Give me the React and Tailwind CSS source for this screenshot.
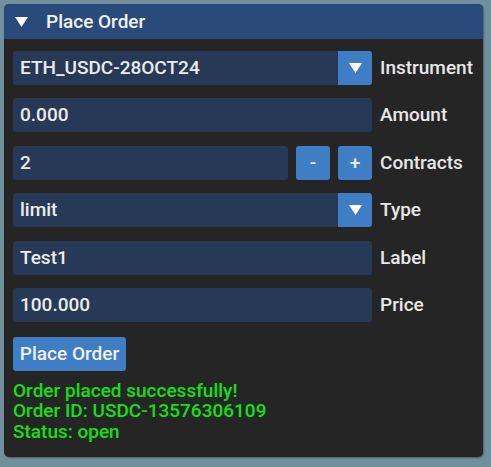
import React from "react";

const Tri = () => (
  <svg width="15" height="12" viewBox="0 0 15 12">
    <polygon points="1,1 14,1 7.5,11" fill="#ffffff" />
  </svg>
);

function Field({ value }) {
  return (
    <div className="flex-1 h-full bg-[#263a57] rounded-[3px] flex items-center pl-[7px] text-[#ececec]">
      {value}
    </div>
  );
}

function Btn({ children }) {
  return (
    <div className="w-[34px] h-full bg-[#3f7dc4] rounded-[3px] flex items-center justify-center text-[#ececec]">
      {children}
    </div>
  );
}

function Combo({ value }) {
  return (
    <div className="flex-1 h-full flex">
      <div className="flex-1 h-full bg-[#263a57] rounded-l-[3px] flex items-center pl-[7px] text-[#ececec]">
        {value}
      </div>
      <div className="w-[34px] h-full bg-[#3f7dc4] rounded-r-[3px] flex items-center justify-center">
        <Tri />
      </div>
    </div>
  );
}

function Row({ children, label }) {
  return (
    <div className="flex items-center h-[34px]">
      <div className="w-[359px] h-full flex gap-[8px]">{children}</div>
      <div className="ml-[8px] text-[#e8e8e8]">{label}</div>
    </div>
  );
}

export default function App() {
  return (
    <div
      className="w-[491px] h-[467px] bg-[#71909d] pt-[4px] pl-[4px]"
      style={{ fontFamily: "Roboto, 'Liberation Sans', sans-serif" }}
    >
      <div className="w-[479px] h-[453px] bg-[#252525] rounded-[5px] overflow-hidden shadow-[1px_1px_2px_rgba(0,0,0,0.35)] text-[19px] leading-[22px] font-medium">
        <div className="h-[35px] bg-[#294a7a] flex items-center pl-[10px] text-[#f2f2f2]">
          <Tri />
          <span className="ml-[17px]">Place Order</span>
        </div>
        <div className="pl-[9px] pt-[12px] flex flex-col gap-[13.4px]">
          <Row label="Instrument">
            <Combo value="ETH_USDC-28OCT24" />
          </Row>
          <Row label="Amount">
            <Field value="0.000" />
          </Row>
          <Row label="Contracts">
            <Field value="2" />
            <Btn>-</Btn>
            <Btn>+</Btn>
          </Row>
          <Row label="Type">
            <Combo value="limit" />
          </Row>
          <Row label="Label">
            <Field value="Test1" />
          </Row>
          <Row label="Price">
            <Field value="100.000" />
          </Row>
        </div>
        <div className="pl-[9px] mt-[15px]">
          <div className="w-[113px] h-[34px] bg-[#3f7dc4] rounded-[3px] flex items-center justify-center text-[#f0f0f0]">
            Place Order
          </div>
        </div>
        <div className="pl-[9px] mt-[10px] text-[#14e014] flex flex-col">
          <div className="h-[20.5px] leading-[20.5px]">Order placed successfully!</div>
          <div className="h-[20.5px] leading-[20.5px]">Order ID: USDC-13576306109</div>
          <div className="h-[20.5px] leading-[20.5px]">Status: open</div>
        </div>
      </div>
    </div>
  );
}
